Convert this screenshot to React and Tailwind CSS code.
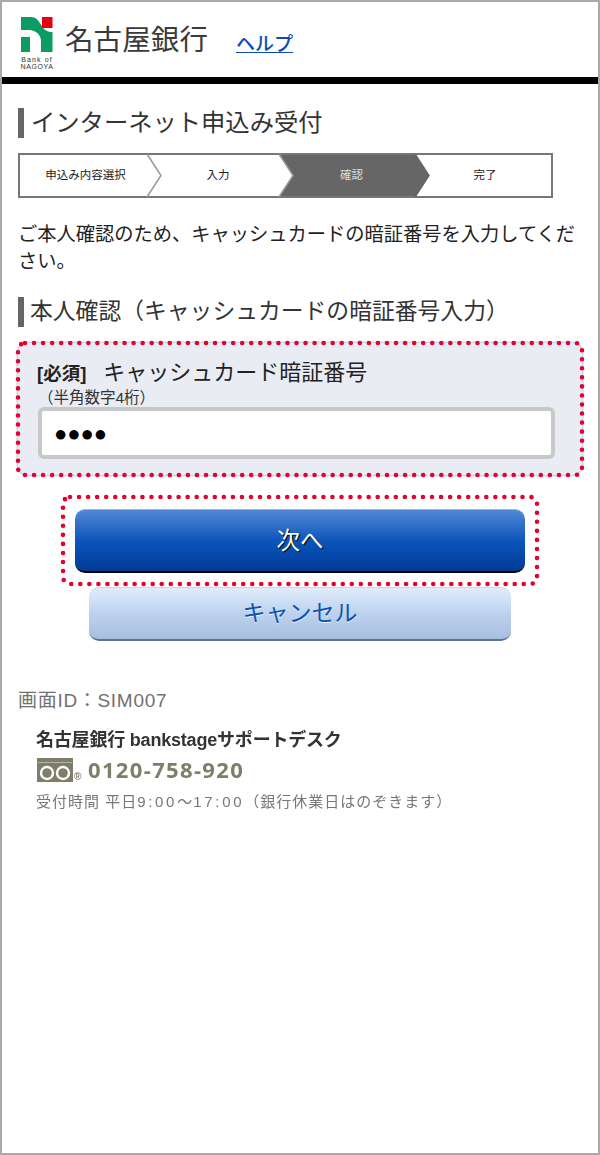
const JP = 'font-["Liberation_Sans","Noto_Sans_CJK_JP",sans-serif]'

function Logo() {
  return (
    <div className="flex w-[32px] flex-col items-center">
      <svg width="32" height="36" viewBox="0 0 32 36">
        <path d="M0 0H10C16 0 18 5 21 9C23 13 27 15 31.5 15V35H20V24C20 18 15 13 8 13H0Z" fill="#0a9c62" />
        <path d="M0 20H9V35H0Z" fill="#0a9c62" />
        <rect x="21" y="0" width="10.5" height="11" fill="#e60012" />
      </svg>
      <div className="text-center text-[7px] leading-[6.5px] whitespace-nowrap text-[#333]">
        <div className="mt-[4px] tracking-[1.1px]">Bank of</div>
        <div className="tracking-[0.6px]">NAGOYA</div>
      </div>
    </div>
  )
}

function Chevron({ fill = 'white', line = '#999' }) {
  return (
    <svg className="absolute top-0 left-full z-10 h-[41px] w-[15px] overflow-visible" viewBox="0 0 15 41">
      <path d="M0 -1L14 20.5L0 42Z" fill={fill} />
      <path d="M0 -1L14 20.5L0 42" fill="none" stroke={line} strokeWidth="1.5" />
    </svg>
  )
}

function Steps() {
  return (
    <div className="mt-[15px] flex h-[45px] w-[535px] border-2 border-[#777] text-[11.5px] text-[#222]">
      <div className="relative flex w-[127px] items-center justify-center pl-[4px]">
        申込み内容選択
        <Chevron />
      </div>
      <div className="relative flex w-[132px] items-center justify-center pl-[10px]">
        入力
        <Chevron />
      </div>
      <div className="relative flex w-[136px] items-center justify-center bg-[#666] pl-[9px] text-[#ddd]">
        確認
        <Chevron fill="#666" line="#666" />
      </div>
      <div className="flex flex-1 items-center justify-center pl-[4px]">完了</div>
    </div>
  )
}

function Heading({ children, className = '' }) {
  return <h2 className={`border-l-[6px] border-[#666] text-[#333] ${className}`}>{children}</h2>
}

// red dots drawn over the panels, as in the manual this page comes from
function DottedFrame({ width, height }) {
  return (
    <svg className="absolute top-0 left-0 overflow-visible" width={width} height={height}>
      <rect
        width={width}
        height={height}
        rx="7"
        fill="none"
        stroke="#e6002d"
        strokeWidth="4.6"
        strokeLinecap="round"
        strokeDasharray="0 9.05"
      />
    </svg>
  )
}

function FreeDial() {
  return (
    <svg width="36" height="24" viewBox="0 0 36 24">
      <rect width="36" height="24" fill="#7f7e68" />
      <path d="M1 4.5H35" stroke="#b5b4a4" strokeWidth="1" />
      <circle cx="10" cy="15" r="6" fill="none" stroke="white" strokeWidth="2.4" />
      <circle cx="26" cy="15" r="6" fill="none" stroke="white" strokeWidth="2.4" />
    </svg>
  )
}

export default function App() {
  return (
    <div className={`h-[1155px] w-[600px] border-2 border-[#aaa] bg-white ${JP}`}>
      <header className="flex h-[75px] items-start pt-[15px] pl-[19px]">
        <Logo />
        <div className="mt-[5px] ml-[12px] text-[28.5px] leading-[36px] tracking-[0.1px] text-[#3a3a3a]">名古屋銀行</div>
        <a href="#" className="mt-[13px] ml-[28px] text-[19px] leading-[30px] font-medium text-[#0b4eb0] underline">
          ヘルプ
        </a>
      </header>
      <div className="h-[7px] bg-black" />

      <main className="px-[16px]">
        <Heading className="mt-[24px] h-[30px] pl-[7px] text-[24.3px] leading-[30px]">インターネット申込み受付</Heading>
        <Steps />

        <p className="mt-[23px] w-[566px] text-[19.25px] leading-[27px] text-[#222]">
          ご本人確認のため、キャッシュカードの暗証番号を入力してください。
        </p>

        <Heading className="mt-[22px] h-[30px] pl-[6px] text-[22.8px] leading-[29px]">
          本人確認（キャッシュカードの暗証番号入力）
        </Heading>

        <section className="relative mt-[16px] h-[132px] w-[564px] rounded-[10px] bg-[#e9ecf3] pt-[18px] pl-[20px] shadow-[0_0_0_1.5px_#c5d9f0]">
          <div className="-ml-px flex items-baseline text-[#222]">
            <span className="text-[18.5px] leading-[24px] font-bold">[必須]</span>
            <span className="ml-[17px] text-[22px] leading-[24px]">キャッシュカード暗証番号</span>
          </div>
          <div className="mt-[3px] text-[15.5px] leading-[17px] text-[#333]">（半角数字4桁）</div>
          <div className="mt-[1px] flex h-[52px] w-[517px] items-center rounded-[6px] border-4 border-[#c8c8c8] bg-white pl-[12px] text-[22px] text-black">
            ●●●●
          </div>
          <DottedFrame width={564} height={132} />
        </section>

        <div className="relative mt-[22px] ml-[45px] h-[87px] w-[474px] pt-[12px] pl-[12px]">
          <button className="h-[64px] w-[450px] rounded-[10px] border-t border-b-2 border-t-[#8ab7ee] border-b-black bg-gradient-to-b from-[#4f88d6] via-[#0a56bb] to-[#033a96] pt-[3px] text-[23.5px] text-white [text-shadow:1px_1px_1px_#000]">
            次へ
          </button>
          <DottedFrame width={474} height={87} />
        </div>

        <button className="mt-[3px] ml-[71px] block h-[54px] w-[422px] rounded-[10px] border-t border-b-2 border-t-[#c4d8f2] border-b-[#5c7390] bg-gradient-to-b from-[#e0ecfb] via-[#bdd2ef] to-[#a8bedf] text-[23px] text-[#0b52ae] [text-shadow:0_1px_0_#e8f0fb]">
          キャンセル
        </button>

        <div className="mt-[47px] text-[19px] leading-[26px] tracking-[0.7px] text-[#707070]">画面ID：SIM007</div>

        <div className="mt-[14px] pl-[19px] blur-[0.3px]">
          <div className="-ml-px text-[18px] leading-[24px] font-bold tracking-[-0.2px] text-[#333]">
            名古屋銀行 bankstageサポートデスク
          </div>
          <div className="mt-[6px] flex h-[24px] items-start">
            <FreeDial />
            <span className="mt-[14px] ml-[1px] w-[10px] text-[10px] leading-none font-bold text-[#7f7e68]">®</span>
            <span className='-mt-px ml-[4px] font-["Open_Sans",sans-serif] text-[22px] leading-[24px] font-bold tracking-[1.35px] text-[#7f7e68]'>
              0120-758-920
            </span>
          </div>
          <div className="mt-[9px] -ml-px text-[15px] leading-[22px] tracking-[1px] text-[#777]">
            受付時間 平日<span className="tracking-[2.7px]">9:00</span>～<span className="tracking-[2.7px]">17:00</span>（銀行休業日はのぞきます）
          </div>
        </div>
      </main>
    </div>
  )
}
